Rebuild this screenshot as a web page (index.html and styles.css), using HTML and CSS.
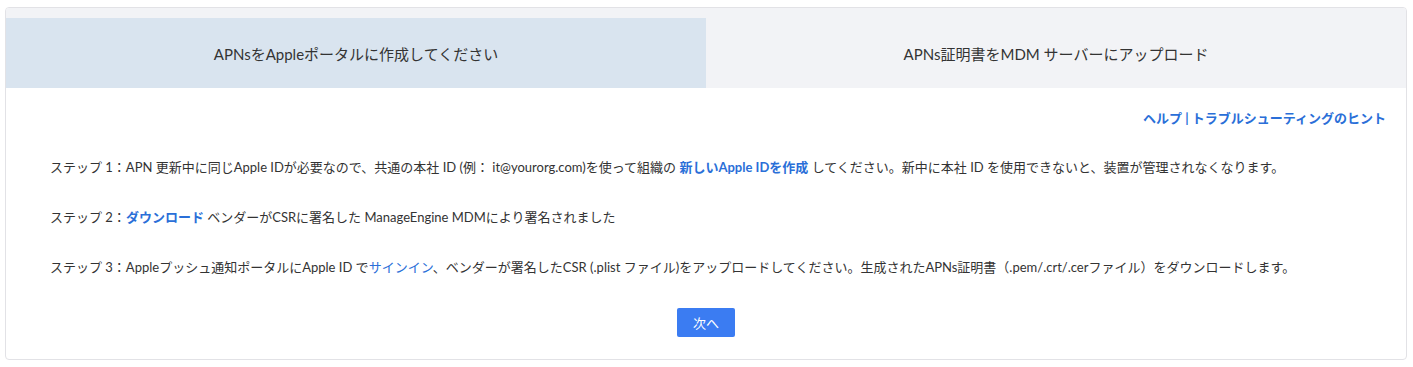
FILE: index.html
```html
<!DOCTYPE html>
<html lang="ja">
<head>
<meta charset="utf-8">
<title>APNs</title>
<link rel="stylesheet" href="styles.css">
</head>
<body>
<div class="card">
  <div class="tabs">
    <div class="tab active">APNsをAppleポータルに作成してください</div>
    <div class="tab">APNs証明書をMDM サーバーにアップロード</div>
  </div>
  <div class="content">
    <div class="help-row"><a class="help" href="#">ヘルプ | トラブルシューティングのヒント</a></div>
    <p class="step">ステップ 1：APN 更新中に同じApple IDが必要なので、共通の本社 ID (例： it@yourorg.com)を使って組織の <a class="link bold" href="#">新しいApple IDを作成</a> してください。新中に本社 ID を使用できないと、装置が管理されなくなります。</p>
    <p class="step">ステップ 2：<a class="link semi" href="#">ダウンロード</a> ベンダーがCSRに署名した ManageEngine MDMにより署名されました</p>
    <p class="step">ステップ 3：Appleプッシュ通知ポータルにApple ID で<a class="link" href="#">サインイン</a>、ベンダーが署名したCSR (.plist ファイル)をアップロードしてください。生成されたAPNs証明書（.pem/.crt/.cerファイル）をダウンロードします。</p>
    <div class="actions"><button class="btn">次へ</button></div>
  </div>
</div>
</body>
</html>
```

FILE: styles.css
```css
* { box-sizing: border-box; }
body {
  margin: 0;
  background: #ffffff;
  font-family: Lato, "Noto Sans CJK JP", sans-serif;
  color: #333333;
}
.card {
  margin: 7px 6px 0 5px;
  height: 353px;
  border: 1px solid #e2e2e6;
  border-radius: 4px;
  overflow: hidden;
  display: flex;
  flex-direction: column;
}
.tabs {
  display: grid;
  grid-template-columns: 700px 1fr;
  padding-top: 10px;
  background: #f2f3f6;
}
.tab {
  height: 70px;
  display: flex;
  align-items: center;
  justify-content: center;
  font-size: 15px;
  color: #333333;
}
.tab.active { background: #d9e4ef; }
.content {
  padding: 19px 20px 0 44px;
}
.help-row {
  display: flex;
  justify-content: flex-end;
  height: 20px;
  align-items: center;
}
.help {
  font-size: 13px;
  font-weight: 700;
  color: #2a6fd8;
  text-decoration: none;
}
.step {
  margin: 0;
  font-size: 13px;
  line-height: 20px;
}
.step:nth-of-type(1) { margin-top: 30px; }
.step + .step { margin-top: 30px; }
.link {
  color: #2a6fd8;
  text-decoration: none;
}
.link.bold { font-weight: 700; }
.link.semi { font-weight: 600; }
.actions {
  display: flex;
  justify-content: center;
  padding-left: 0;
  margin-top: 31px;
  margin-left: -24px;
}
.btn {
  width: 58px;
  height: 29px;
  border: none;
  border-radius: 2px;
  background: #3b7cf2;
  color: #ffffff;
  font-family: Lato, "Noto Sans CJK JP", sans-serif;
  font-size: 13px;
  padding: 0;
}
```
